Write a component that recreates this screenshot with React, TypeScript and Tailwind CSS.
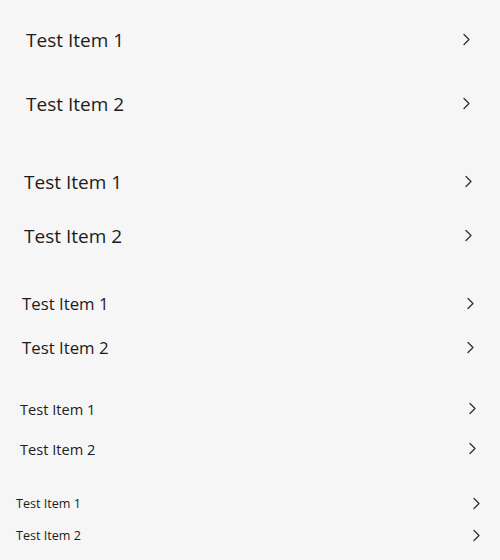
const groups = [
  { size: "text-[19px]", pad: "px-[26px]", row: "h-[64px]" },
  { size: "text-[19px]", pad: "px-[24px]", row: "h-[54px]" },
  { size: "text-[16.8px]", pad: "px-[22px]", row: "h-[44px]" },
  { size: "text-[14.6px]", pad: "px-[20px]", row: "h-[40px]" },
  { size: "text-[12.6px]", pad: "px-[16px]", row: "h-[32px]" },
];

function Chevron() {
  return (
    <svg width="16" height="16" viewBox="0 0 16 16" fill="none" className="shrink-0 text-[#333]">
      <path d="M6 2.5 L11 7.5 L6 12.5" stroke="currentColor" strokeWidth="1.3" strokeLinecap="round" strokeLinejoin="round" />
    </svg>
  );
}

export default function App() {
  return (
    <div
      className="w-[500px] h-[560px] overflow-hidden bg-[#f6f6f6] pt-[8px] flex flex-col gap-[19px] text-[#1c1c1c]"
      style={{ fontFamily: '"Open Sans", "Noto Sans", sans-serif' }}
    >
      {groups.map((g, gi) => (
        <ul key={gi} className="flex flex-col">
          {["Test Item 1", "Test Item 2"].map((label) => (
            <li key={label} className={`flex items-center justify-between ${g.row} ${g.pad} ${g.size}`}>
              <span className="leading-none">{label}</span>
              <Chevron />
            </li>
          ))}
        </ul>
      ))}
    </div>
  );
}
